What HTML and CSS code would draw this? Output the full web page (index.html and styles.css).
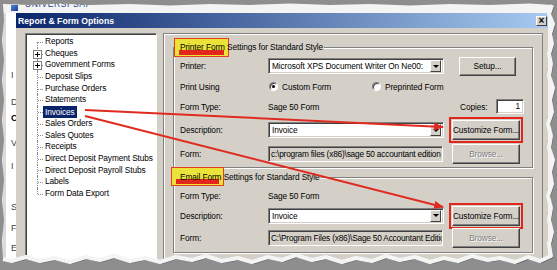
FILE: index.html
```html
<!doctype html>
<html>
<head>
<title>Report &amp; Form Options</title>
<link rel="stylesheet" href="styles.css">
</head>
<body>
<div class="screen">
	<div class="bgtitle"><span class="bgicon"></span><span>UNIVERSI SAI</span></div>
	<div class="desk">
		<div class="bgwin">
			<span>I</span><span>D</span><span class="strong">C</span><span>V</span><span>I</span><span>S</span><span>F</span><span>E</span>
		</div>
		<div class="dialog">
			<div class="titlebar">
				<span>Report &amp; Form Options</span>
				<span class="close">&times;</span>
			</div>
			<div class="body">
				<ul class="tree">
					<li class="first">Reports</li>
					<li><i class="plus"></i>Cheques</li>
					<li><i class="plus"></i>Government Forms</li>
					<li>Deposit Slips</li>
					<li>Purchase Orders</li>
					<li>Statements</li>
					<li><span class="sel">Invoices</span></li>
					<li>Sales Orders</li>
					<li>Sales Quotes</li>
					<li>Receipts</li>
					<li>Direct Deposit Payment Stubs</li>
					<li>Direct Deposit Payroll Stubs</li>
					<li>Labels</li>
					<li class="last">Form Data Export</li>
				</ul>

				<div class="panel">
					<div class="group">
						<div class="legend"><span class="mark">Printer Form</span> Settings for Standard Style</div>
						<div class="grid printer">
							<span>Printer:</span>
							<div class="select"><span>Microsoft XPS Document Writer On Ne00:</span><i class="arrow"></i></div>
							<span></span>
							<div class="btn setup">Setup...</div>

							<span>Print Using</span>
							<div class="radios">
								<span class="option"><i class="radio on"></i>Custom Form</span>
								<span class="option"><i class="radio"></i>Preprinted Form</span>
							</div>

							<span>Form Type:</span>
							<span>Sage 50 Form</span>
							<span></span>
							<div class="copies"><span>Copies:</span><span class="input">1</span></div>

							<span>Description:</span>
							<div class="select"><span>Invoice</span><i class="arrow"></i></div>
							<span></span>
							<div class="btn callout">Customize Form...</div>

							<span>Form:</span>
							<div class="field">c:\program files (x86)\sage 50 accountant edition</div>
							<span></span>
							<div class="btn off">Browse...</div>
						</div>
					</div>

					<div class="group second">
						<div class="legend"><span class="mark wide">Email Form</span> Settings for Standard Style</div>
						<div class="grid email">
							<span>Form Type:</span>
							<span>Sage 50 Form</span>
							<span></span>
							<span></span>

							<span>Description:</span>
							<div class="select"><span>Invoice</span><i class="arrow"></i></div>
							<span></span>
							<div class="btn callout">Customize Form...</div>

							<span>Form:</span>
							<div class="field">C:\Program Files (x86)\Sage 50 Accountant Edition</div>
							<span></span>
							<div class="btn off">Browse...</div>
						</div>
					</div>
					<div class="more">Select Default Forms and Print Settings</div>
				</div>
			</div>
		</div>
	</div>

	<svg class="arrows" width="557" height="270" viewBox="0 0 557 270">
		<defs>
			<marker id="head" viewBox="0 0 10 8" refX="9" refY="4" markerWidth="10" markerHeight="8" markerUnits="userSpaceOnUse" orient="auto">
				<path d="M0 0 L10 4 L0 8 z" fill="#e12a1f"/>
			</marker>
		</defs>
		<line x1="85" y1="110" x2="443" y2="127" stroke="#e12a1f" stroke-width="2" marker-end="url(#head)"/>
		<line x1="85" y1="116" x2="443" y2="207" stroke="#e12a1f" stroke-width="2" marker-end="url(#head)"/>
	</svg>

	<svg class="torn" width="557" height="270" viewBox="0 0 557 270">
		<path fill="#8e8e8e" fill-rule="evenodd" d="M0 0H557V270H0Z M3 4 L30 5 L60 3.5 L90 5 L130 4 L170 5.5 L210 4 L250 5 L290 3.5 L330 5 L370 4 L410 5.5 L450 4 L490 5 L530 3.5 L552 5 L549 14 L553 24 L550 34 L552 44 L549 54 L551 64 L549 76 L553 88 L550 100 L552 112 L548 124 L551 136 L549 148 L553 160 L550 172 L552 184 L548 196 L551 208 L549 220 L552 232 L549 244 L551 256 L540 261 L528 257 L515 262 L500 258 L488 260 L472 256 L458 261 L444 258 L430 262 L415 257 L400 260 L386 256 L372 261 L356 258 L342 262 L326 257 L312 260 L296 255 L282 260 L268 257 L252 262 L238 258 L222 261 L206 256 L192 260 L176 257 L160 262 L145 258 L130 261 L114 256 L100 260 L86 257 L70 262 L55 258 L40 261 L26 257 L12 261 L3 259 L2 240 L4 220 L2 200 L4 180 L2 160 L4 140 L2 120 L4 100 L2 80 L4 60 L2 40 L4 20 Z"/>
		<path fill="none" stroke="#5c5c5c" stroke-width="1.5" transform="translate(1.5 1.5)" d="M552 5 L549 14 L553 24 L550 34 L552 44 L549 54 L551 64 L549 76 L553 88 L550 100 L552 112 L548 124 L551 136 L549 148 L553 160 L550 172 L552 184 L548 196 L551 208 L549 220 L552 232 L549 244 L551 256 L540 261 L528 257 L515 262 L500 258 L488 260 L472 256 L458 261 L444 258 L430 262 L415 257 L400 260 L386 256 L372 261 L356 258 L342 262 L326 257 L312 260 L296 255 L282 260 L268 257 L252 262 L238 258 L222 261 L206 256 L192 260 L176 257 L160 262 L145 258 L130 261 L114 256 L100 260 L86 257 L70 262 L55 258 L40 261 L26 257 L12 261 L3 259"/>
		<path fill="none" stroke="#f4f4f4" stroke-width="4" stroke-linejoin="round" d="M552 5 L549 14 L553 24 L550 34 L552 44 L549 54 L551 64 L549 76 L553 88 L550 100 L552 112 L548 124 L551 136 L549 148 L553 160 L550 172 L552 184 L548 196 L551 208 L549 220 L552 232 L549 244 L551 256 L540 261 L528 257 L515 262 L500 258 L488 260 L472 256 L458 261 L444 258 L430 262 L415 257 L400 260 L386 256 L372 261 L356 258 L342 262 L326 257 L312 260 L296 255 L282 260 L268 257 L252 262 L238 258 L222 261 L206 256 L192 260 L176 257 L160 262 L145 258 L130 261 L114 256 L100 260 L86 257 L70 262 L55 258 L40 261 L26 257 L12 261 L3 259"/>
	</svg>
</div>
</body>
</html>
```

FILE: styles.css
```css
html, body {
  margin: 0;
}
body {
  background: #8e8e8e;
  font-family: "Liberation Sans", Arial, sans-serif;
  font-size: 8.3px;
  letter-spacing: -0.1px;
  color: #000;
}

.screen {
  position: relative;
  width: 557px;
  height: 270px;
  overflow: hidden;
  background: #f4f4f4;
}

/* window behind the dialog */
.bgtitle {
  height: 13px;
  display: flex;
  align-items: flex-start;
  gap: 7px;
  padding-left: 11px;
  box-sizing: border-box;
  color: #24468c;
  font-size: 8.5px;
  line-height: 8px;
  letter-spacing: 0.6px;
}
.bgicon {
  width: 7px;
  height: 6px;
  margin-top: 5px;
  background: linear-gradient(135deg, #4f86d8, #1a3f94);
}
.desk {
  display: flex;
  height: 257px;
}
.bgwin {
  width: 13px;
  margin-left: 3px;
  padding-left: 5px;
  box-sizing: border-box;
  border-left: 3px solid #dadada;
  background: #fff;
  overflow: hidden;
  font-size: 9px;
  color: #444;
}
.bgwin span {
  display: block;
  height: 10px;
  line-height: 10px;
}
.bgwin span:nth-child(1) { margin-top: 57px; }
.bgwin span:nth-child(2) { margin-top: 17px; }
.bgwin span:nth-child(3) { margin-top: 6px; }
.bgwin span:nth-child(4) { margin-top: 15px; }
.bgwin span:nth-child(5) { margin-top: 13px; }
.bgwin span:nth-child(6) { margin-top: 31px; }
.bgwin span:nth-child(7) { margin-top: 11px; }
.bgwin span:nth-child(8) { margin-top: 10px; }
.bgwin .strong {
  color: #000;
  font-weight: bold;
}

/* dialog */
.dialog {
  width: 532px;
  display: flex;
  flex-direction: column;
}
.titlebar {
  height: 15px;
  display: flex;
  align-items: center;
  justify-content: space-between;
  padding: 0 1px 0 2px;
  background: linear-gradient(to right, #0a246a, #a6caf0);
  color: #fff;
  font-weight: bold;
  font-size: 8.7px;
  letter-spacing: 0;
}
.close {
  width: 11px;
  height: 10px;
  box-sizing: border-box;
  background: #d4d0c8;
  border: 1px solid;
  border-color: #fff #404040 #404040 #fff;
  color: #000;
  font-size: 10px;
  line-height: 7px;
  text-align: center;
}
.body {
  flex: 1;
  display: flex;
  gap: 6px;
  padding: 5px 5px 0 9px;
  background: #d4d0c8;
}

/* tree */
.tree {
  width: 132px;
  box-sizing: border-box;
  margin: 0;
  padding: 2px 0 0 0;
  list-style: none;
  background: #fff;
  border: 1px solid;
  border-color: #808080 #fff #fff #808080;
  box-shadow: inset 1px 1px #404040;
}
.tree li {
  position: relative;
  height: 11.7px;
  line-height: 11.7px;
  padding-left: 19px;
  white-space: nowrap;
}
.tree li::before {
  content: "";
  position: absolute;
  left: 11px;
  top: 0;
  bottom: 0;
  border-left: 1px dotted #8a8a8a;
}
.tree li.first::before {
  top: 50%;
}
.tree li.last::before {
  bottom: 50%;
}
.tree li::after {
  content: "";
  position: absolute;
  left: 12px;
  top: 50%;
  width: 5px;
  border-top: 1px dotted #8a8a8a;
}
.plus {
  position: absolute;
  left: 7px;
  top: 2px;
  width: 9px;
  height: 9px;
  box-sizing: border-box;
  border: 1px solid #808080;
  background: #fff;
  z-index: 1;
}
.plus::before {
  content: "";
  position: absolute;
  left: 1px;
  top: 3px;
  width: 5px;
  height: 1px;
  background: #000;
}
.plus::after {
  content: "";
  position: absolute;
  left: 3px;
  top: 1px;
  width: 1px;
  height: 5px;
  background: #000;
}
.sel {
  display: inline-block;
  margin-left: -2px;
  padding: 0 2px;
  line-height: 12px;
  background: #0a246a;
  color: #fff;
}

/* right panel */
.panel {
  width: 380px;
  box-sizing: border-box;
  padding: 13px 9px 0 9px;
  border: 1px solid #808080;
  box-shadow: inset 1px 1px #fff;
}
.group {
  padding-bottom: 3px;
  border: 1px solid #808080;
  box-shadow: inset 1px 1px #fff, 1px 1px #fff;
}
.group.second {
  margin-top: 9px;
}
.legend {
  display: table;
  margin: -6px 0 0 5px;
  padding: 0 1px;
  line-height: 10px;
  white-space: nowrap;
  background: #d4d0c8;
}
.mark {
  margin: 0 -4px 0 -6px;
  padding: 3px 3px 4px 5px;
  border: 1px solid #e5401e;
  background: linear-gradient(#e3261c, #e3261c) no-repeat 4px calc(100% - 1px) / calc(100% - 8px) 5px, #ebe33a;
}
.mark.wide {
  margin: 0 -3px 0 -9px;
  padding: 4px 2px 3px 8px;
}

.grid {
  display: grid;
  grid-template-columns: 88px 176px 8px 72px;
  align-items: center;
  padding: 4px 0 0 6px;
  white-space: nowrap;
}
.grid.printer {
  grid-template-rows: 20px 21px 19px 28px 20px;
}
.grid.email {
  grid-template-rows: 18px 21px 23px;
  padding-top: 5px;
}

.select, .field, .input {
  height: 16px;
  box-sizing: border-box;
  border: 1px solid;
  border-color: #808080 #fff #fff #808080;
  box-shadow: inset 1px 1px #404040, inset -1px -1px #d4d0c8;
  white-space: nowrap;
  overflow: hidden;
}
.select {
  display: flex;
  align-items: center;
  justify-content: space-between;
  padding: 0 2px 0 3px;
  background: #fff;
}
.arrow {
  flex: none;
  width: 11px;
  height: 12px;
  box-sizing: border-box;
  display: flex;
  align-items: center;
  justify-content: center;
  background: #d4d0c8;
  border: 1px solid;
  border-color: #fff #404040 #404040 #fff;
}
.arrow::before {
  content: "";
  border-left: 3px solid transparent;
  border-right: 3px solid transparent;
  border-top: 3px solid #000;
}
.field {
  width: 175px;
  padding: 0 2px;
  line-height: 14px;
  letter-spacing: -0.2px;
  background: #d4d0c8;
}

.btn {
  width: 68px;
  height: 20px;
  box-sizing: border-box;
  display: flex;
  align-items: center;
  justify-content: center;
  white-space: nowrap;
  background: #d4d0c8;
  border: 1px solid;
  border-color: #fff #404040 #404040 #fff;
  box-shadow: inset -1px -1px #808080;
}
.btn.setup {
  width: 57px;
  height: 19px;
  margin-left: 7px;
}
.btn.off {
  color: #808080;
  text-shadow: 1px 1px #fff;
}
.btn.callout {
  outline: 2px solid #e3261c;
  outline-offset: 1px;
}

.radios {
  grid-column: 2 / 5;
  display: flex;
  padding-left: 1px;
}
.option {
  width: 103px;
  display: flex;
  align-items: center;
  gap: 4px;
}
.radio {
  width: 9px;
  height: 9px;
  box-sizing: border-box;
  display: flex;
  align-items: center;
  justify-content: center;
  border-radius: 50%;
  border: 1px solid;
  border-color: #808080 #fff #fff #808080;
  box-shadow: inset 1px 1px #404040;
  background: #fff;
}
.radio.on::before {
  content: "";
  width: 3px;
  height: 3px;
  border-radius: 50%;
  background: #000;
}

.copies {
  display: flex;
  align-items: center;
  justify-content: space-between;
  padding-left: 8px;
}
.input {
  width: 28px;
  height: 15px;
  padding-right: 3px;
  line-height: 13px;
  text-align: right;
  background: #fff;
}

.more {
  margin-top: 5px;
  padding-left: 7px;
  white-space: nowrap;
}

.arrows, .torn {
  position: absolute;
  left: 0;
  top: 0;
  pointer-events: none;
}
```
